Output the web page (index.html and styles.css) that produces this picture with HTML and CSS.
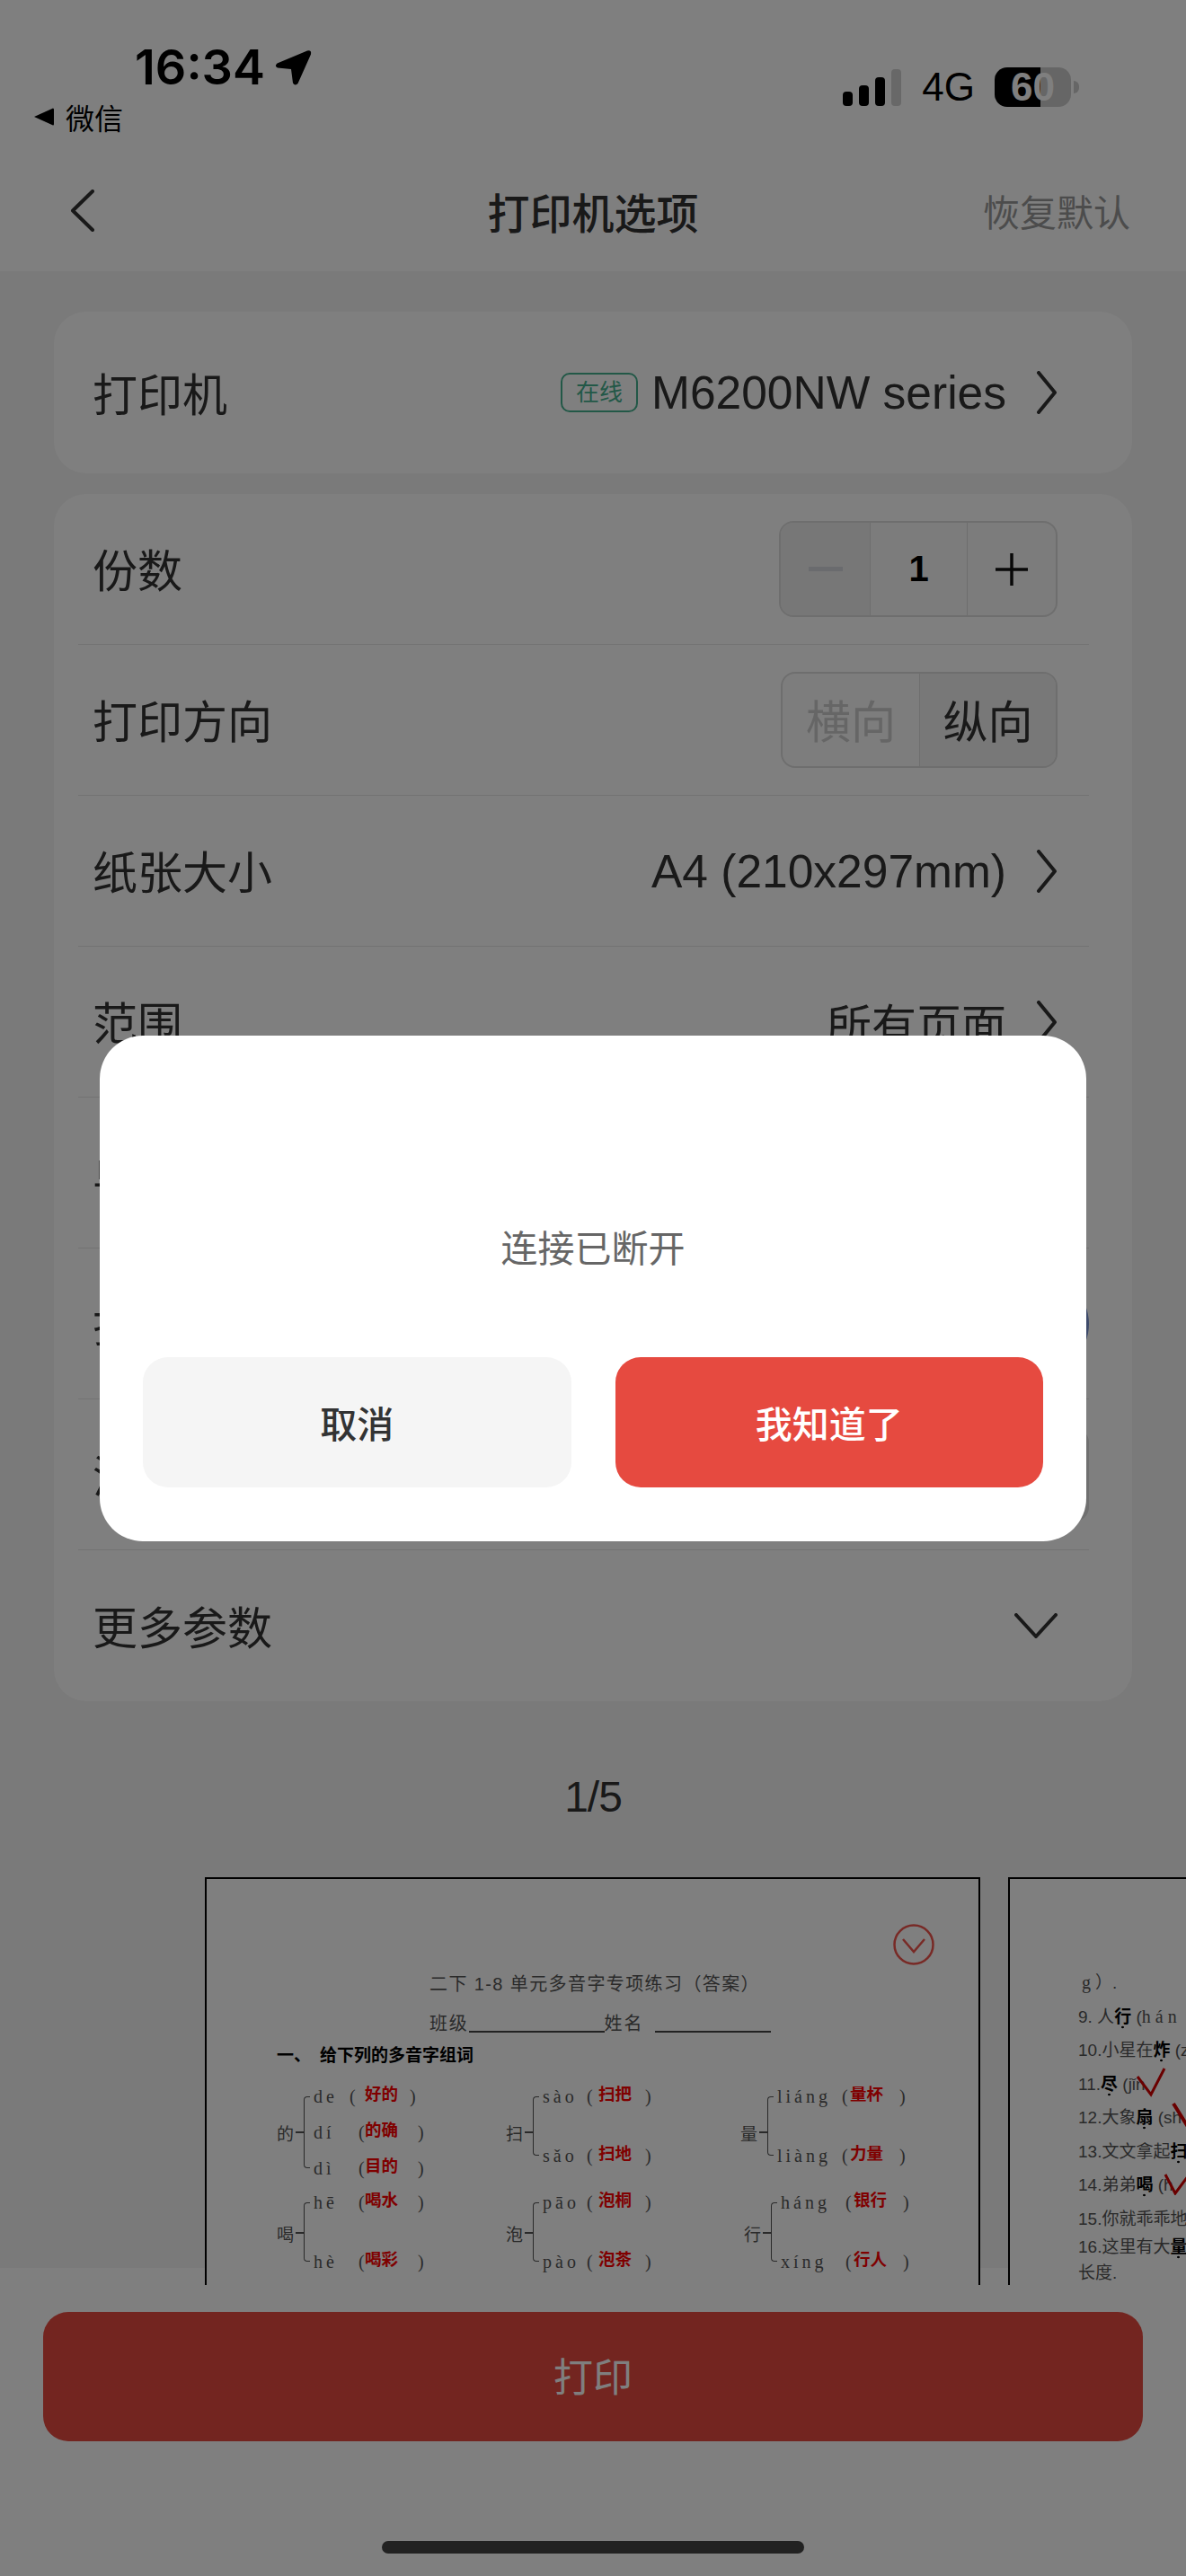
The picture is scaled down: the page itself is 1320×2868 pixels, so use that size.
FILE: index.html
```html
<!DOCTYPE html>
<html>
<head>
    <title>打印机选项</title>
    <meta charset="utf-8">
    <link rel="stylesheet" href="styles.css">
</head>
<body>
    <div class="top">
        <div class="status">
            <div class="status-left">
                <div class="time-row">
                    <span class="time">16:34</span>
                    <svg class="loc" width="42" height="41" viewBox="0 0 42 41"><path d="M37 1.5 L3.5 15.5 Q0 18.5 4 20.5 L19 22 L21 37.5 Q23.5 41 26.5 38 L41 5.5 Q42 .5 37 1.5Z" fill="#000"/></svg>
                </div>
                <div class="wechat-row">
                    <svg width="22" height="20" viewBox="0 0 22 20"><path d="M0 10 L21 0.5 Q22 0.5 22 2 L22 18 Q22 19.5 21 19.5Z" fill="#000"/></svg>
                    <span>微信</span>
                </div>
            </div>
            <div class="status-right">
                <svg width="66" height="44" viewBox="0 0 66 44">
                    <rect x="0" y="27" width="11" height="16" rx="4" fill="#000"/>
                    <rect x="18" y="20" width="11" height="23" rx="4" fill="#000"/>
                    <rect x="36" y="11" width="11" height="32" rx="4" fill="#000"/>
                    <rect x="54" y="2" width="11" height="41" rx="4" fill="#d0d0d0"/>
                </svg>
                <span class="net">4G</span>
                <div class="battery">60</div>
                <div class="battery-nub"></div>
            </div>
        </div>
        <div class="nav">
            <div class="nav-side">
                <svg class="nav-back" width="27" height="47" viewBox="0 0 27 47"><path d="M25 2 L3 23.5 L25 45" fill="none" stroke="#333" stroke-width="4" stroke-linecap="round" stroke-linejoin="round"/></svg>
            </div>
            <div class="nav-title">打印机选项</div>
            <div class="nav-side nav-reset">恢复默认</div>
        </div>
    </div>

    <div class="main">
        <div class="card card-printer">
            <div class="row row-last">
                <span>打印机</span>
                <div class="row-value">
                    <span class="badge">在线</span>
                    <span class="latin">M6200NW series</span>
                    <svg class="chev" width="24" height="48" viewBox="0 0 24 48"><path d="M3 2 L21 24 L3 46" fill="none" stroke="#333" stroke-width="4" stroke-linecap="round" stroke-linejoin="round"/></svg>
                </div>
            </div>
        </div>

        <div class="card">
            <div class="row">
                <span>份数</span>
                <div class="stepper">
                    <div class="step step-minus"><i></i></div>
                    <div class="step step-num">1</div>
                    <div class="step step-plus">
                        <svg width="36" height="36" viewBox="0 0 36 36"><path d="M18 0 V36 M0 18 H36" stroke="#111" stroke-width="3.5"/></svg>
                    </div>
                </div>
            </div>
            <div class="row">
                <span>打印方向</span>
                <div class="seg">
                    <div class="seg-item seg-off">横向</div>
                    <div class="seg-item seg-on">纵向</div>
                </div>
            </div>
            <div class="row">
                <span>纸张大小</span>
                <div class="row-value">
                    <span class="latin">A4 (210x297mm)</span>
                    <svg class="chev" width="24" height="48" viewBox="0 0 24 48"><path d="M3 2 L21 24 L3 46" fill="none" stroke="#333" stroke-width="4" stroke-linecap="round" stroke-linejoin="round"/></svg>
                </div>
            </div>
            <div class="row">
                <span>范围</span>
                <div class="row-value">
                    <span>所有页面</span>
                    <svg class="chev" width="24" height="48" viewBox="0 0 24 48"><path d="M3 2 L21 24 L3 46" fill="none" stroke="#333" stroke-width="4" stroke-linecap="round" stroke-linejoin="round"/></svg>
                </div>
            </div>
            <div class="row">
                <span>单双面</span>
            </div>
            <div class="row">
                <span>打印批注</span>
                <div class="knob"></div>
            </div>
            <div class="row">
                <span>清晰度</span>
                <div class="quality"></div>
            </div>
            <div class="row row-last">
                <span>更多参数</span>
                <svg class="chev-down" width="48" height="28" viewBox="0 0 48 28"><path d="M2 2 L24 26 L46 2" fill="none" stroke="#333" stroke-width="4" stroke-linecap="round" stroke-linejoin="round"/></svg>
            </div>
        </div>

        <div class="pager">1/5</div>
    </div>

    <div class="strip">
        <div class="paper">
            <svg class="paper-check" width="46" height="46" viewBox="0 0 46 46">
                <circle cx="23" cy="23" r="21.5" fill="none" stroke="#f0554c" stroke-width="2.5"/>
                <path d="M11 17 L23 31 L35 17" fill="none" stroke="#f0554c" stroke-width="2.5"/>
            </svg>
            <div class="sheet-title">二下 1-8 单元多音字专项练习（答案）</div>
            <div class="sheet-name">班级<span class="blank blank-a"></span>姓名<span class="blank blank-b"></span></div>
            <div class="sheet-head"><span class="head-num">一、</span>给下列的多音字组词</div>
            <div class="groups">
                <div class="group c1">
                    <span class="han">的</span><i class="tick"></i>
                    <div class="lines">
                        <div class="pl"><span class="py">de</span><span class="op">(</span><b class="ans">好的</b><span class="cp">)</span></div>
                        <div class="pl near"><span class="py">dí</span><span class="op">(</span><b class="ans">的确</b><span class="cp">)</span></div>
                        <div class="pl near"><span class="py">dì</span><span class="op">(</span><b class="ans">目的</b><span class="cp">)</span></div>
                    </div>
                </div>
                <div class="group c2">
                    <span class="han">扫</span><i class="tick"></i>
                    <div class="lines two">
                        <div class="pl"><span class="py">sào</span><span class="op">(</span><b class="ans">扫把</b><span class="cp">)</span></div>
                        <div class="pl"><span class="py">sǎo</span><span class="op">(</span><b class="ans">扫地</b><span class="cp">)</span></div>
                    </div>
                </div>
                <div class="group c3">
                    <span class="han">量</span><i class="tick"></i>
                    <div class="lines two">
                        <div class="pl"><span class="py">liáng</span><span class="op">(</span><b class="ans">量杯</b><span class="cp">)</span></div>
                        <div class="pl"><span class="py">liàng</span><span class="op">(</span><b class="ans">力量</b><span class="cp">)</span></div>
                    </div>
                </div>
                <div class="group c1">
                    <span class="han">喝</span><i class="tick"></i>
                    <div class="lines two">
                        <div class="pl near"><span class="py">hē</span><span class="op">(</span><b class="ans">喝水</b><span class="cp">)</span></div>
                        <div class="pl near"><span class="py">hè</span><span class="op">(</span><b class="ans">喝彩</b><span class="cp">)</span></div>
                    </div>
                </div>
                <div class="group c2">
                    <span class="han">泡</span><i class="tick"></i>
                    <div class="lines two">
                        <div class="pl"><span class="py">pāo</span><span class="op">(</span><b class="ans">泡桐</b><span class="cp">)</span></div>
                        <div class="pl"><span class="py">pào</span><span class="op">(</span><b class="ans">泡茶</b><span class="cp">)</span></div>
                    </div>
                </div>
                <div class="group c3 shift">
                    <span class="han">行</span><i class="tick"></i>
                    <div class="lines two">
                        <div class="pl"><span class="py">háng</span><span class="op">(</span><b class="ans">银行</b><span class="cp">)</span></div>
                        <div class="pl"><span class="py">xíng</span><span class="op">(</span><b class="ans">行人</b><span class="cp">)</span></div>
                    </div>
                </div>
            </div>
        </div>

        <div class="paper paper-next">
            <div class="q q-first"><span class="spaced">g</span>）.</div>
            <div class="q">9. 人<b>行</b> (<span class="spaced">hán</span></div>
            <div class="q">10.小星在<b>炸</b> (z</div>
            <div class="q">11.<b>尽</b> (jǐn
                <svg class="tick-mark tm-11" width="34" height="34" viewBox="0 0 34 34"><path d="M2 11 L17 31 L32 2" fill="none" stroke="#d40000" stroke-width="3"/></svg>
            </div>
            <div class="q">12.大象<b>扇</b> (sh
                <svg class="tick-mark tm-12" width="34" height="34" viewBox="0 0 34 34"><path d="M2 3 L17 27 L32 0" fill="none" stroke="#d40000" stroke-width="4"/></svg>
            </div>
            <div class="q">13.文文拿起<b>扫</b></div>
            <div class="q">14.弟弟<b>喝</b> (h
                <svg class="tick-mark tm-14" width="34" height="26" viewBox="0 0 34 26"><path d="M2 3 L13 24 L30 1" fill="none" stroke="#d40000" stroke-width="3"/></svg>
            </div>
            <div class="q q-15">15.你就乖乖地待</div>
            <div class="q q-16">16.这里有大<b>量</b></div>
            <div class="q q-17">长度.</div>
        </div>
    </div>

    <div class="footer">
        <div class="print-btn">打印</div>
        <div class="home-bar"></div>
    </div>

    <div class="scrim">
        <div class="modal">
            <div class="modal-msg">连接已断开</div>
            <div class="modal-btns">
                <div class="modal-btn btn-cancel">取消</div>
                <div class="modal-btn btn-ok">我知道了</div>
            </div>
        </div>
    </div>
</body>
</html>
```
FILE: styles.css
```css
:root {
    --text: #333;
    --page-bg: #f5f5f5;
    --line: #e6e6e6;
    --red: #e64a40;
}

* {
    margin: 0;
    padding: 0;
    box-sizing: border-box;
}

body {
    position: relative;
    width: 1320px;
    height: 2868px;
    overflow: hidden;
    background: var(--page-bg);
    color: var(--text);
    font-family: "Liberation Sans", "Noto Sans CJK SC", sans-serif;
    font-size: 50px;
}

/* header */
.top {
    height: 302px;
    background: #fff;
}

.status {
    height: 170px;
    display: flex;
    justify-content: space-between;
}

.status-left {
    padding-top: 48px;
    padding-left: 38px;
}

.time-row {
    display: flex;
    align-items: center;
    height: 54px;
    padding-left: 112px;
    color: #000;
}

.time {
    font-family: Inter, sans-serif;
    font-size: 54px;
    font-weight: 600;
    line-height: 54px;
}

.loc {
    margin-left: 10px;
}

.wechat-row {
    display: flex;
    align-items: center;
    gap: 13px;
    height: 40px;
    margin-top: 8px;
    font-size: 32px;
    color: #000;
}

.status-right {
    display: flex;
    align-items: center;
    height: 44px;
    margin-top: 75px;
    padding-right: 119px;
    color: #000;
}

.net {
    margin-left: 22px;
    margin-right: 22px;
    font-size: 44px;
}

.battery {
    width: 85px;
    height: 44px;
    border-radius: 14px;
    background: linear-gradient(90deg, #000 60%, #ccc 60%);
    color: #fff;
    font-size: 44px;
    font-weight: bold;
    line-height: 44px;
    text-align: center;
}

.battery-nub {
    width: 6px;
    height: 14px;
    margin-left: 3px;
    border-radius: 0 6px 6px 0;
    background: #ccc;
}

.nav {
    height: 128px;
    display: flex;
    align-items: center;
    padding: 0 62px;
}

.nav-side {
    flex: 1;
    display: flex;
}

.nav-back {
    margin-left: 16px;
}

.nav-title {
    font-size: 47px;
    font-weight: 500;
}

.nav-reset {
    justify-content: flex-end;
    font-size: 41px;
    color: #999;
}

/* option cards */
.main {
    padding: 45px 60px 0;
}

.card {
    background: #fff;
    border-radius: 36px;
}

.card-printer {
    height: 180px;
    margin-bottom: 23px;
}

.card-printer .row {
    height: 180px;
}

.row {
    height: 168px;
    margin: 0 48px 0 27px;
    padding: 0 35px 0 16px;
    display: flex;
    align-items: center;
    justify-content: space-between;
    border-bottom: 1px solid var(--line);
}

.row > span {
    margin-top: -3px;
}

.row-last {
    border-bottom: none;
}

.row-value {
    display: flex;
    align-items: center;
}

.latin {
    font-size: 51.5px;
}

.chev {
    margin-left: 33px;
}

.badge {
    width: 86px;
    height: 44px;
    margin-right: 15px;
    border: 2px solid #45b08f;
    border-radius: 10px;
    color: #45b08f;
    font-size: 26px;
    line-height: 40px;
    text-align: center;
}

.stepper {
    display: flex;
    width: 310px;
    height: 107px;
    border: 2px solid #ddd;
    border-radius: 16px;
    background: #f8f8f8;
    overflow: hidden;
}

.step {
    display: flex;
    align-items: center;
    justify-content: center;
}

.step-minus {
    width: 100px;
    background: #eee;
    border-right: 1px solid #ddd;
}

.step-minus i {
    width: 38px;
    height: 5px;
    background: #d4d7dc;
}

.step-num {
    width: 108px;
    font-size: 40px;
    font-weight: bold;
    color: #000;
    border-right: 1px solid #ddd;
}

.step-plus {
    flex: 1;
}

.seg {
    display: flex;
    width: 308px;
    height: 107px;
    border: 2px solid #ddd;
    border-radius: 16px;
    background: #fbfbfb;
    overflow: hidden;
}

.seg-item {
    display: flex;
    align-items: center;
    justify-content: center;
    padding-bottom: 3px;
}

.seg-off {
    width: 153px;
    color: #ccc;
    border-right: 1px solid #ddd;
}

.seg-on {
    flex: 1;
    background: #f0f0f0;
}

.knob {
    width: 120px;
    height: 110px;
    margin-right: -35px;
    border-radius: 55px;
    background: #7a94d4;
}

.quality {
    width: 340px;
    height: 104px;
    margin-right: -35px;
    border-radius: 16px;
    background: #e0e0e0;
}

.pager {
    margin-top: 77px;
    font-size: 48px;
    line-height: 60px;
    text-align: center;
    letter-spacing: -1px;
}

/* paper previews */
.strip {
    position: relative;
    z-index: 1;
    display: flex;
    gap: 31px;
    height: 454px;
    margin-top: 59px;
    padding-left: 228px;
    overflow: hidden;
}

.paper {
    position: relative;
    flex-shrink: 0;
    width: 863px;
    height: 600px;
    padding: 102px 0 0 78px;
    border: 2px solid #000;
    background: #fff;
    color: #555;
    font-size: 19px;
}

.paper-next {
    padding: 97px 0 0 76px;
    white-space: nowrap;
}

.paper-check {
    position: absolute;
    top: 50px;
    right: 49px;
}

.sheet-title,
.sheet-name {
    margin-left: 170px;
    font-size: 20px;
    line-height: 30px;
    letter-spacing: 1.4px;
}

.sheet-name {
    display: flex;
    margin-top: 14px;
    letter-spacing: 1.8px;
}

.blank {
    display: block;
    height: 25px;
    border-bottom: 2px solid #444;
}

.blank-a {
    width: 151px;
}

.blank-b {
    width: 129px;
    margin-left: 13px;
}

.sheet-head {
    display: flex;
    margin-top: 6px;
    font-weight: bold;
    line-height: 30px;
    color: #000;
}

.head-num {
    width: 48px;
}

.groups {
    display: grid;
    grid-template-columns: 255px 261px 1fr;
    margin-top: 11px;
}

.group {
    display: flex;
    align-items: center;
    height: 118px;
}

.group:nth-child(n+4) {
    height: 106px;
}

.shift {
    margin-left: 4px;
}

.han {
    width: 20px;
    font-size: 19px;
}

.tick {
    width: 9px;
    height: 2px;
    margin-left: 1px;
    background: #555;
}

.lines {
    position: relative;
    align-self: flex-start;
    display: flex;
    flex-direction: column;
    gap: 2px;
    padding-left: 11px;
}

.lines.two {
    gap: 28px;
}

.lines::before {
    content: "";
    position: absolute;
    left: 0;
    top: 19px;
    bottom: 19px;
    width: 6px;
    border: 1px solid #555;
    border-right: none;
    border-radius: 4px 0 0 4px;
}

.pl {
    display: flex;
    align-items: center;
    height: 38px;
}

.py {
    font-family: "Liberation Serif", serif;
    font-size: 20px;
    letter-spacing: 4px;
}

.ans {
    width: 37px;
    margin-bottom: 8px;
    color: #ff0000;
    font-size: 18.5px;
    white-space: nowrap;
}

.op,
.cp {
    font-family: "Liberation Serif", serif;
    font-size: 20px;
}

.c1 .py { width: 40px; }
.c1 .op { width: 17px; }
.c1 .cp { margin-left: 13px; }
.c1 .near .py { width: 50px; }
.c1 .near .op { width: 7px; }
.c1 .near .cp { margin-left: 22px; }

.c2 .py { width: 49px; }
.c2 .op { width: 13px; }
.c2 .cp { margin-left: 15px; }

.c3 .py { width: 72px; }
.c3 .op { width: 9px; }
.c3 .cp { margin-left: 18px; }

.q {
    position: relative;
    line-height: 37.5px;
}

.q b {
    padding-bottom: 3px;
    color: #000;
    background: radial-gradient(circle, #000 1px, transparent 1.6px) center bottom / 100% 4px no-repeat;
}

.q-first {
    padding-left: 4px;
}

.spaced {
    font-family: "Liberation Serif", serif;
    font-size: 20px;
    letter-spacing: 5px;
}

.q-16 {
    line-height: 26px;
}

.q-17 {
    line-height: 32px;
}

.tick-mark {
    position: absolute;
}

.tm-11 {
    left: 64px;
    top: -1px;
}

.tm-12 {
    left: 104px;
    top: 0;
}

.tm-14 {
    left: 95px;
    top: 4px;
}

/* bottom bar */
.footer {
    position: absolute;
    left: 0;
    right: 0;
    top: 2525px;
    bottom: 0;
    padding: 49px 48px 0;
    background: #fff;
}

.print-btn {
    height: 144px;
    border-radius: 28px;
    background: var(--red);
    color: #fff;
    font-size: 44px;
    line-height: 148px;
    text-align: center;
}

.home-bar {
    position: absolute;
    left: 425px;
    bottom: 25px;
    width: 470px;
    height: 14px;
    border-radius: 7px;
    background: #444;
}

/* dialog */
.scrim {
    position: fixed;
    inset: 0;
    z-index: 10;
    display: flex;
    align-items: center;
    justify-content: center;
    background: rgba(0, 0, 0, 0.5);
}

.modal {
    width: 1098px;
    height: 563px;
    padding: 111px 48px 60px;
    display: flex;
    flex-direction: column;
    border-radius: 48px;
    background: #fff;
}

.modal-msg {
    flex: 1;
    display: flex;
    align-items: center;
    justify-content: center;
    font-size: 41px;
    color: #666;
}

.modal-btns {
    display: flex;
    gap: 49px;
}

.modal-btn {
    flex: 1;
    height: 145px;
    display: flex;
    align-items: center;
    justify-content: center;
    border-radius: 28px;
    font-size: 41px;
    font-weight: 500;
}

.btn-cancel {
    background: #f5f5f5;
}

.btn-ok {
    background: var(--red);
    color: #fff;
}
```
